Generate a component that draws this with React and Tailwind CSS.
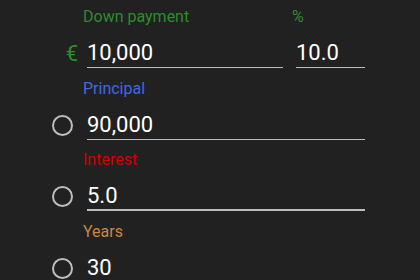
import { useState } from "react";

const Ring = () => (
    <div className="w-[21px] h-[21px] rounded-full border-2 border-[#bdbdbd]" />
);

const Field = ({ value, thick }) => (
    <div className={`flex-1 h-[29px] ${thick ? "border-b-2" : "border-b"} border-[#bdbdbd]`}>
        <div className="text-[22px] leading-[28px] text-white">{value}</div>
    </div>
);

const Section = ({ label, color, icon, children }) => (
    <div className="h-[71.5px]">
        <div className={`ml-[83px] h-[20px] text-[16px] leading-[20px] ${color}`}>{label}</div>
        <div className="mt-[12px] flex items-center">
            <div className="w-[87px] flex justify-end pr-[14px]">{icon}</div>
            {children}
        </div>
    </div>
);

const App = () => {
    const [values] = useState({ down: "10,000", pct: "10.0", principal: "90,000", interest: "5.0", years: "30" });

    return (
        <div className="w-[420px] h-[280px] overflow-hidden bg-[#212121] pt-[7px] font-['Roboto',sans-serif]">
            {/* down payment + percent */}
            <div className="h-[71.5px]">
                <div className="flex h-[20px] text-[16px] leading-[20px] text-[#2e8b2e]">
                    <span className="ml-[83px] w-[209px]">Down payment</span>
                    <span>%</span>
                </div>
                <div className="mt-[12px] flex items-center">
                    <div className="w-[87px] flex justify-end pr-[9px] text-[22px] leading-[28px] text-[#2e8b2e]">€</div>
                    <div className="w-[196px]"><Field value={values.down} /></div>
                    <div className="w-[69px] ml-[13px]"><Field value={values.pct} /></div>
                </div>
            </div>

            <Section label="Principal" color="text-[#4169e1]" icon={<Ring />}>
                <div className="w-[278px]"><Field value={values.principal} /></div>
            </Section>

            <Section label="Interest" color="text-[#d00000]" icon={<Ring />}>
                <div className="w-[278px]"><Field value={values.interest} thick /></div>
            </Section>

            <Section label="Years" color="text-[#cd853f]" icon={<Ring />}>
                <div className="w-[278px]"><Field value={values.years} /></div>
            </Section>
        </div>
    );
};

export default App;
